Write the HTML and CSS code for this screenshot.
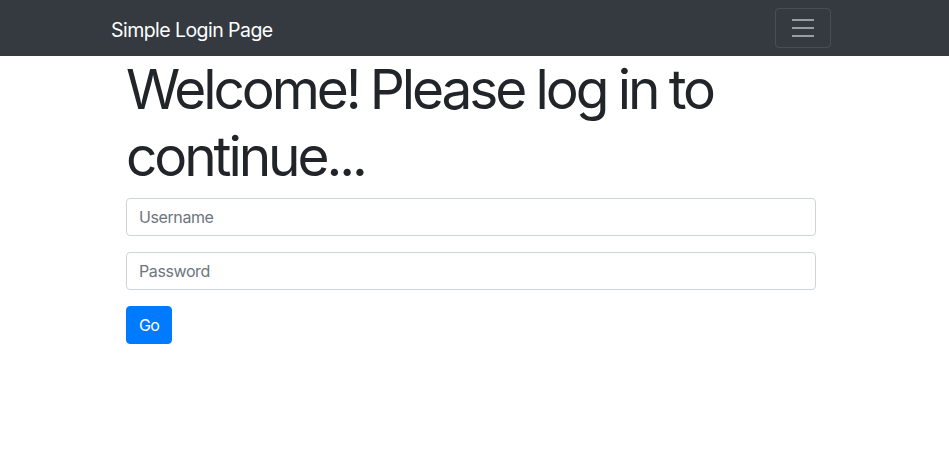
FILE: index.html
```html
<!DOCTYPE html>
<html lang="en">
<head>
<meta charset="utf-8">
<title>Simple Login Page</title>
<link rel="stylesheet" href="styles.css">
</head>
<body>
<nav class="navbar">
  <div class="nav-inner">
    <a class="brand" href="#">Simple Login Page</a>
    <button class="toggler" type="button" aria-label="Toggle navigation">
      <svg width="30" height="30" viewBox="0 0 30 30"><path stroke="rgba(255,255,255,0.5)" stroke-linecap="butt" stroke-miterlimit="10" stroke-width="2" d="M4 7h22M4 15h22M4 23h22"/></svg>
    </button>
  </div>
</nav>
<main class="container">
  <h1 class="title">Welcome! Please log in to continue...</h1>
  <form class="login">
    <div class="group"><input class="field" type="text" placeholder="Username"></div>
    <div class="group"><input class="field" type="password" placeholder="Password"></div>
    <button class="btn" type="button">Go</button>
  </form>
</main>
</body>
</html>
```
FILE: styles.css
```css
* { box-sizing: border-box; }
body {
  margin: 0;
  font-family: Inter, "Liberation Sans", sans-serif;
  color: #212529;
  background: #fff;
  font-size: 16px;
  line-height: 1.5;
}
.navbar {
  background: #343a40;
  padding: 8px 0;
}
.nav-inner {
  width: 720px;
  margin-left: calc(50% - 363.5px);
  display: flex;
  align-items: center;
  justify-content: space-between;
}
.brand {
  color: #fff;
  text-decoration: none;
  font-size: 19.5px;
  line-height: 30px;
  padding: 7px 0 3px;
  letter-spacing: -0.55px;
}
.toggler {
  width: 56px;
  height: 40px;
  padding: 0;
  background: transparent;
  border: 1px solid rgba(255,255,255,0.1);
  border-radius: 4px;
  display: flex;
  align-items: center;
  justify-content: center;
}
.toggler svg { display: block; }
.container {
  width: 720px;
  margin-left: calc(50% - 363.5px);
  padding: 0 15px;
}
.title {
  margin: 0 0 8px;
  font-size: 55px;
  font-weight: 400;
  line-height: 67px;
  letter-spacing: -3.1px;
  word-spacing: -1px;
}
.group { margin-bottom: 16px; }
.field {
  display: block;
  width: 100%;
  height: 38px;
  padding: 6px 12px;
  font: inherit;
  font-size: 16px;
  letter-spacing: -0.4px;
  color: #495057;
  border: 1px solid #ced4da;
  border-radius: 4px;
  background: #fff;
}
.field::placeholder { color: #6c757d; }
.btn {
  height: 38px;
  padding: 6px 12px;
  font: inherit;
  font-size: 16px;
  letter-spacing: -0.8px;
  color: #fff;
  background: #007bff;
  border: 1px solid #007bff;
  border-radius: 4px;
}
```
